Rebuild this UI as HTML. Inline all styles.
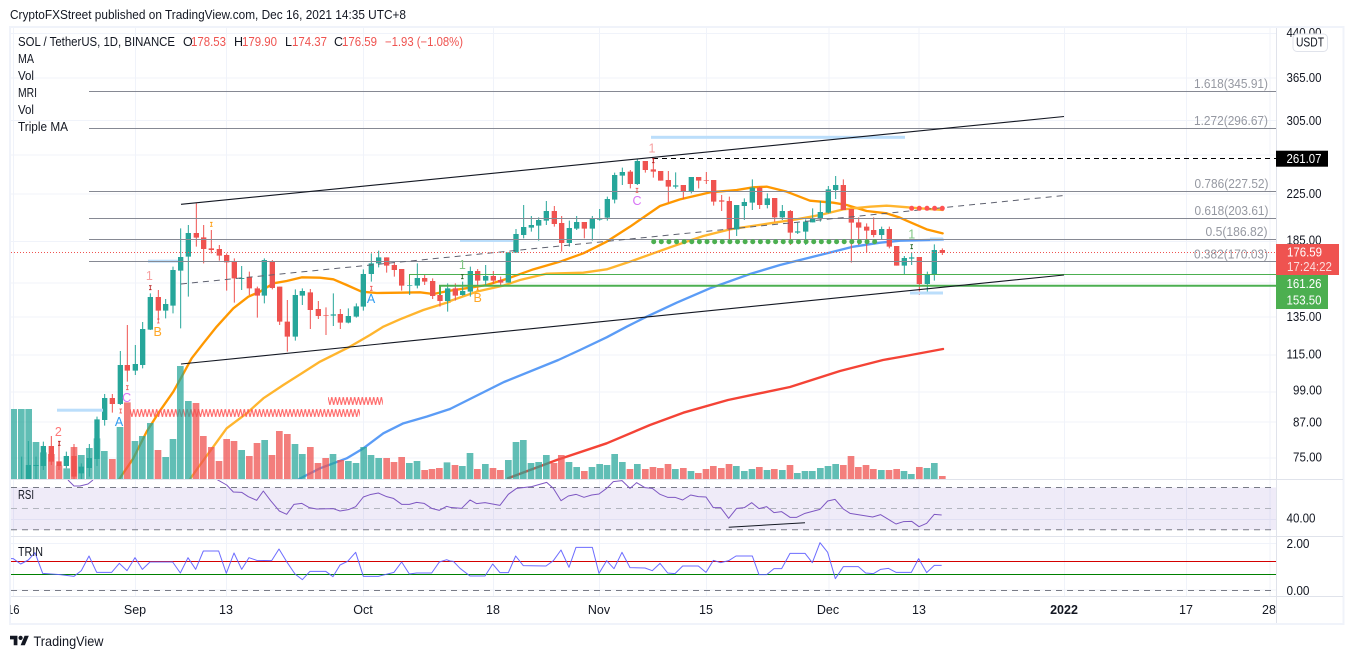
<!DOCTYPE html>
<html><head><meta charset="utf-8"><title>SOL / TetherUS</title>
<style>
html,body{margin:0;padding:0;background:#fff;width:1354px;height:659px;overflow:hidden}
svg{display:block}
text{font-family:"Liberation Sans",sans-serif;font-size:12.5px;fill:#131722}
.p{text-anchor:start}
.m{text-anchor:middle}
.f{fill:#9598a1;text-anchor:end}
.w{fill:#fff}
</style></head><body>
<svg width="1354" height="659" viewBox="0 0 1354 659" xmlns="http://www.w3.org/2000/svg">
<defs>
<pattern id="zz" patternUnits="userSpaceOnUse" width="3.81" height="8"><path d="M-1.9 8L0 0L1.9 8L3.81 0L5.7 8" fill="none" stroke="#f55" stroke-width="1.1" opacity=".9"/></pattern>
<clipPath id="c1"><rect x="11" y="28" width="1265.5" height="451"/></clipPath>
<clipPath id="c2"><rect x="11" y="480" width="1265.5" height="56"/></clipPath>
<clipPath id="c3"><rect x="10.5" y="597" width="30" height="26"/></clipPath>
</defs>

<text x="10" y="19" textLength="396" lengthAdjust="spacingAndGlyphs">CryptoFXStreet published on TradingView.com, Dec 16, 2021 14:35 UTC+8</text>
<rect x="10" y="27" width="1333.5" height="597" fill="#fff" stroke="#f0f3fa" stroke-width="2"/>

<!-- grid -->
<path d="M13.5 28V596M135.5 28V596M226.5 28V596M363.5 28V596M493.5 28V596M599.5 28V596M706.5 28V596M829 28V596M919 28V596M1064.5 28V596M1186.5 28V596M1270 28V596" stroke="#f0f3fa" fill="none"/>
<path d="M11 33.5H1276M11 78H1276M11 120.5H1276M11 155H1276M11 194H1276M11 241.5H1276M11 283H1276M11 317H1276M11 355H1276M11 392H1276M11 422H1276M11 458H1276M11 519.5H1276M11 543.5H1276M11 590H1276" stroke="#f0f3fa" fill="none"/>

<g clip-path="url(#c1)">
<!-- moving averages -->
<g fill="none" stroke-linejoin="round" stroke-linecap="round">
<polyline transform="translate(0,220) scale(.33333)" stroke="#ff9800" stroke-width="7" points="358,777 400,715 440,635 478,575 520,515 545,470 575,415 610,370 650,320 700,265 745,230 780,215 820,190 860,183 905,172 960,173 1000,178 1040,195 1085,215 1130,219 1200,218 1260,217 1300,222 1350,212"/>
<polyline transform="translate(450,130) scale(.33333)" stroke="#ff9800" stroke-width="7" points="0,482 60,473 110,465 175,445 250,418 330,395 400,370 470,335 540,290 630,228 690,208 780,187 860,180 910,172 950,170 1010,185 1080,212 1150,218 1190,225 1250,243 1310,250 1350,263 1370,272 1430,298 1478,310"/>
<polyline transform="translate(0,220) scale(.33333)" stroke="#ffb52e" stroke-width="7" points="570,777 600,735 640,680 680,625 740,580 790,535 850,495 905,460 960,425 1050,380 1110,345 1150,320 1200,298 1270,270 1350,245"/>
<polyline transform="translate(450,130) scale(.33333)" stroke="#ffb52e" stroke-width="7" points="0,513 80,485 160,467 210,450 290,431 400,428 470,418 540,395 610,370 680,345 760,318 840,298 960,280 1040,268 1110,255 1180,238 1260,230 1310,227 1350,230 1410,235 1478,240"/>
<polyline transform="translate(0,220) scale(.33333)" stroke="#5b9cf6" stroke-width="7" points="897,777 960,745 1040,715 1090,685 1150,640 1210,610 1280,590 1350,567"/>
<polyline transform="translate(450,130) scale(.33333)" stroke="#5b9cf6" stroke-width="7" points="0,837 162,756 325,690 390,660 470,622 530,590 590,560 680,518 780,475 900,432 990,405 1130,370 1210,350 1290,338 1350,332 1478,329"/>
<polyline stroke="#f44336" stroke-width="2.4" points="508,478.3 556.7,460 606.7,443.3 650,425 683.3,412.7 728,400 790,387 840,371 883,360 900,357 943,349"/>
</g>

<!-- zigzags -->
<g transform="translate(130,409)"><rect width="230" height="8" fill="url(#zz)"/></g>
<g transform="translate(328,397)"><rect width="55" height="8" fill="url(#zz)"/></g>

<!-- volume -->
<g transform="translate(0,220) scale(.33333)" fill="none" stroke-width="20">
<path stroke="#26a69a" stroke-opacity=".73" d="M41 567V777M64 567V777M86 567V777M108 666V777M130 697V777M200 745V777M244 705V777M268 684V777M291 655V777M313 693V777M360 621V777M405 663V777M427 648V777M451 609V777M497 711V777M519 657V777M541 438V777M565 543V777M725 690V777M794 660V777M885 672V777M907 702V777M999 702V777M1045 723V777M1068 729V777M1091 681V777M1113 705V777M1136 714V777M1228 729V777M1251 723V777M1341 727V777"/>
<path stroke="#ef5350" stroke-opacity=".75" d="M154 702V777M177 737V777M222 681V777M337 717V777M382 547V777M474 690V777M588 549V777M610 648V777M634 681V777M657 723V777M680 657V777M702 663V777M748 708V777M771 669V777M816 705V777M838 633V777M862 642V777M931 681V777M954 729V777M977 714V777M1022 720V777M1160 714V777M1182 726V777M1205 711V777M1274 750V777M1296 747V777M1318 744V777"/>
</g>
<g transform="translate(450,400) scale(.33333)" fill="none" stroke-width="20">
<path stroke="#26a69a" stroke-opacity=".73" d="M37 198V237M60 159V237M106 192V237M175 180V237M198 126V237M220 120V237M243 189V237M266 186V237M289 165V237M357 186V237M380 201V237M426 201V237M449 192V237M471 195V237M494 162V237M517 186V237M562 192V237M676 207V237M723 213V237M859 198V237M883 213V237M906 207V237M951 210V237M997 210V237M1042 219V237M1065 213V237M1087 213V237M1111 204V237M1134 198V237M1157 192V237M1294 210V237M1362 213V237M1384 222V237M1431 204V237M1453 189V237"/>
<path stroke="#ef5350" stroke-opacity=".75" d="M15 195V237M82 207V237M129 204V237M151 210V237M312 189V237M334 165V237M403 213V237M540 207V237M586 207V237M609 201V237M631 204V237M654 192V237M700 204V237M745 219V237M768 207V237M790 198V237M814 204V237M837 192V237M928 201V237M973 207V237M1020 195V237M1180 195V237M1203 168V237M1225 201V237M1248 195V237M1270 207V237M1317 210V237M1340 207V237M1408 201V237M1477 228V237"/>
</g>

<!-- candles -->
<g transform="translate(0,220) scale(.33333)" fill="none">
<path stroke="#26a69a" stroke-width="3" d="M65 710V777M85 663V777M108 710V777M130 665V750M199 695V745M244 730V777M268 672V770M291 590V738M314 522V617M361 393V555M406 375V465M428 306V445M451 220V330M497 237V295M519 140V280M542 25V325M565 15V230M725 138V210M793 115V250M886 208V362M907 205V255M1000 220V318M1045 265V310M1069 250V293M1090 148V272M1114 100V185M1136 92V142M1229 195V225M1252 130V205M1343 190V275"/>
<path stroke="#26a69a" stroke-width="16" d="M85 735V777M108 735V738M130 678V738M199 708V738M244 740V760M268 714V744M291 598V717M314 534V600M361 435V552M406 432V452M428 327V435M451 231V329M497 252V272M519 150V257M542 111V152M565 39V110M725 174V177M793 120V227M886 225V350M907 213V227M1000 283V287M1045 288V308M1069 259V290M1090 162V260M1114 130V162M1136 112V130M1229 195V197M1252 174V197M1343 205V243"/>
<path stroke="#ef5350" stroke-width="3" d="M154 648V735M177 665V750M222 672V777M337 522V578M382 315V485M475 210V300M589 -50V80M611 15V130M634 30V100M658 75V122M680 100V212M703 115V248M748 155V225M772 200V293M817 120V208M839 200V315M862 240V395M931 207V327M955 243V297M978 262V345M1021 267V327M1160 112V158M1183 127V170M1205 147V212M1274 165V195M1298 175V237M1320 195V260"/>
<path stroke="#ef5350" stroke-width="16" d="M154 678V725M177 724V738M222 708V770M337 534V552M382 435V452M475 231V272M589 39V53M611 52V87M634 85V90M658 87V107M680 105V127M703 125V175M748 172V205M772 205V227M817 123V204M839 200V305M862 305V350M931 217V270M955 267V288M978 286V288M1021 282V308M1160 112V137M1183 135V150M1205 147V197M1274 174V185M1298 183V228M1320 225V243"/>
</g>
<g transform="translate(450,130) scale(.33333)" fill="none">
<path stroke="#26a69a" stroke-width="3" d="M38 455V497M61 410V500M107 405V465M175 367V458M198 297V368M221 225V325M244 258V305M266 262V332M289 213V285M358 272V350M380 258V300M427 258V332M449 237V272M472 200V272M494 128V220M517 113V165M562 88V165M677 127V176M724 141V190M860 225V318M883 205V270M907 148V240M952 190V235M997 225V270M1043 278V312M1067 268V345M1088 235V277M1111 213V275M1135 168V250M1157 138V207M1295 290V330"/>
<path stroke="#26a69a" stroke-width="16" d="M38 483V495M61 423V485M107 438V452M175 367V458M198 312V368M221 291V315M244 285V293M266 270V287M289 243V272M358 294V339M380 276V296M427 265V296M449 267V269M472 207V263M494 135V209M517 126V137M562 93V162M677 166V170M724 141V183M860 225V298M883 216V228M907 173V218M952 205V225M997 243V262M1043 304V308M1067 275V305M1088 266V277M1111 246V264M1135 178V248M1157 165V180M1295 297V315"/>
<path stroke="#ef5350" stroke-width="3" d="M16 460V512M83 417V480M130 423V462M152 440V465M313 228V290M335 258V365M403 276V325M541 120V175M586 93V128M610 85V143M632 123V152M655 123V217M700 165V207M746 141V175M769 126V162M791 150V227M815 195V243M838 200V328M929 170V237M974 204V275M1021 240V345M1180 148V240M1204 237V398M1226 262V345M1250 280V367M1271 262V322M1318 290V355M1340 348V407"/>
<path stroke="#ef5350" stroke-width="16" d="M16 475V497M83 423V452M130 438V452M152 450V458M313 243V282M335 279V339M403 276V296M541 125V162M586 93V120M610 118V125M632 123V152M655 150V170M700 165V183M746 141V152M769 151V153M791 150V215M815 211V215M838 213V298M929 173V225M974 204V262M1021 243V308M1180 165V240M1204 237V278M1226 277V293M1250 290V302M1271 300V315M1318 297V350M1340 348V407"/>
</g>
<g transform="translate(760,150) scale(.33333)" fill="none">
<path stroke="#26a69a" stroke-width="3" d="M433 318V372M455 307V345M502 365V425M523 283V392"/>
<path stroke="#26a69a" stroke-width="16" d="M433 324V347M455 322V326M502 373V402M523 300V373"/>
<path stroke="#ef5350" stroke-width="3" d="M478 321V435M547 295V315"/>
<path stroke="#ef5350" stroke-width="16" d="M478 321V402M547 300V309"/>
</g>

<!-- highlights -->
<g fill="#bbdefb">
<rect x="57" y="408.7" width="46" height="3"/>
<rect x="148" y="259.7" width="30" height="3"/>
<rect x="460" y="239" width="53" height="3"/>
<rect x="651" y="135.8" width="254" height="3"/>
<rect x="910" y="291.5" width="33" height="3"/>
<rect x="930" y="237.5" width="13" height="3"/>
</g>

<!-- fib lines -->
<path d="M89 91.5H1276M89 128.5H1276M89 191.5H1276M89 218.5H1276M89 239.5H1276M89 261.5H1276" stroke="#868993" fill="none"/>
<!-- green zones -->
<path d="M409.5 285V274.5H1276" stroke="#4caf50" fill="none"/>
<path d="M440 295V285.7H1276" stroke="#4caf50" stroke-width="2" fill="none"/>
<!-- trend lines -->
<path d="M181 204.3L1064 116.5M181 364L1064 275" stroke="#131722" stroke-width="1.1" fill="none"/>
<path d="M181 284L1064 195.5" stroke="#5f6270" stroke-dasharray="6 5" fill="none"/>
<path d="M653 158.5H1276" stroke="#000" stroke-dasharray="5 4" fill="none"/>
<!-- dots -->
<path d="M653.7 241.7H882" stroke="#4caf50" stroke-width="5" stroke-linecap="round" stroke-dasharray="0 7.62" fill="none"/>
<g fill="#ff5252"><circle cx="911.7" cy="208.3" r="2.5"/><circle cx="919.3" cy="208.3" r="2.5"/><circle cx="927" cy="208.3" r="2.5"/><circle cx="934.6" cy="208.3" r="2.5"/><circle cx="942.3" cy="208.3" r="2.5"/></g>
<!-- last price -->
<path d="M11 252.5H1276" stroke="#ef5350" stroke-dasharray="1 2" fill="none"/>

<!-- tiny markers -->
<g fill="none" stroke-width=".8">
<path stroke="#b71c1c" d="M149 285.7h2.6m-1.3 0v4m-1.3 0h2.6M58 441.3h2.6m-1.3 0v4m-1.3 0h2.6M652 158.7h2.6m-1.3 0v4m-1.3 0h2.6"/>
<path stroke="#ef5350" d="M157 319h2.6m-1.3 0v4m-1.3 0h2.6M126 385.7h2.6m-1.3 0v4m-1.3 0h2.6M119.4 409h2.6m-1.3 0v4m-1.3 0h2.6M370 286.3h2.6m-1.3 0v4m-1.3 0h2.6M635.7 188.3h2.6m-1.3 0v4m-1.3 0h2.6"/>
<path stroke="#ff9800" d="M210 222.3h2.6m-1.3 0v4m-1.3 0h2.6M476.4 287h2.6m-1.3 0v3m-1.3 0h2.6"/>
<path stroke="#1b5e20" d="M461 274.7h2.6m-1.3 0v4m-1.3 0h2.6M910.4 244.7h2.6m-1.3 0v4m-1.3 0h2.6"/>
</g>
<!-- pattern letters -->
<g>
<text class="m" x="149.3" y="280" style="font-size:12.5px;fill:#f7a0a0">1</text>
<text class="m" x="58.3" y="436" style="font-size:12.5px;fill:#f77">2</text>
<text class="m" x="157.7" y="336" style="font-size:12.5px;fill:#ffa726">B</text>
<text class="m" x="126.7" y="402" style="font-size:12.5px;fill:#d873f5">C</text>
<text class="m" x="119" y="426" style="font-size:12.5px;fill:#2f9bf0">A</text>
<text class="m" x="371" y="303" style="font-size:12.5px;fill:#2f9bf0">A</text>
<text class="m" x="462.3" y="269" style="font-size:12.5px;fill:#81c784">1</text>
<text class="m" x="477.7" y="302" style="font-size:12.5px;fill:#ffa726">B</text>
<text class="m" x="637" y="205" style="font-size:12.5px;fill:#d873f5">C</text>
<text class="m" x="652" y="152.5" style="font-size:12.5px;fill:#f7a0a0">1</text>
<text class="m" x="911.7" y="238.5" style="font-size:12.5px;fill:#81c784">1</text>
</g>
</g>

<!-- fib labels -->
<text class="f" x="1268" y="88" textLength="74" lengthAdjust="spacingAndGlyphs">1.618(345.91)</text>
<text class="f" x="1268" y="125" textLength="74" lengthAdjust="spacingAndGlyphs">1.272(296.67)</text>
<text class="f" x="1268.5" y="188" textLength="74" lengthAdjust="spacingAndGlyphs">0.786(227.52)</text>
<text class="f" x="1268.5" y="215" textLength="74" lengthAdjust="spacingAndGlyphs">0.618(203.61)</text>
<text class="f" x="1267.5" y="236" textLength="62" lengthAdjust="spacingAndGlyphs">0.5(186.82)</text>
<text class="f" x="1268" y="258.5" textLength="74" lengthAdjust="spacingAndGlyphs">0.382(170.03)</text>

<!-- legend -->
<text x="18" y="46" textLength="157" lengthAdjust="spacingAndGlyphs">SOL / TetherUS, 1D, BINANCE</text>
<text x="183" y="46">O</text><text x="191" y="46" textLength="35" lengthAdjust="spacingAndGlyphs" style="fill:#ef5350">178.53</text>
<text x="234" y="46">H</text><text x="242" y="46" textLength="35" lengthAdjust="spacingAndGlyphs" style="fill:#ef5350">179.90</text>
<text x="285" y="46">L</text><text x="292" y="46" textLength="35" lengthAdjust="spacingAndGlyphs" style="fill:#ef5350">174.37</text>
<text x="334" y="46">C</text><text x="342" y="46" textLength="35" lengthAdjust="spacingAndGlyphs" style="fill:#ef5350">176.59</text>
<text x="385" y="46" textLength="78" lengthAdjust="spacingAndGlyphs" style="fill:#ef5350">−1.93 (−1.08%)</text>
<text x="18" y="63" textLength="16" lengthAdjust="spacingAndGlyphs">MA</text>
<text x="18" y="80" textLength="16" lengthAdjust="spacingAndGlyphs">Vol</text>
<text x="18" y="97" textLength="19" lengthAdjust="spacingAndGlyphs">MRI</text>
<text x="18" y="114" textLength="16" lengthAdjust="spacingAndGlyphs">Vol</text>
<text x="18" y="131" textLength="50" lengthAdjust="spacingAndGlyphs">Triple MA</text>

<!-- RSI pane -->
<rect x="11" y="487.5" width="1265.5" height="42.5" fill="#7e57c2" fill-opacity=".12"/>
<path d="M11 487.5H1276M11 529.7H1276" stroke="#787b86" stroke-dasharray="6 5" fill="none"/>
<path d="M11 508.5H1276" stroke="#b2b5be" stroke-dasharray="6 5" fill="none"/>
<g clip-path="url(#c2)" fill="none" stroke="#7e57c2" stroke-width="3" stroke-linejoin="round">
<polyline stroke-width="1" points="68,480 74,486 80,486 88,484 93,480"/>
<polyline transform="translate(0,400) scale(.33333)" points="650,238 680,255 700,276 725,277 745,290 770,301 790,273 812,302 838,333 860,343 882,313 905,310 928,323 950,327 1000,326 1020,333 1045,329 1067,320 1090,291 1110,284 1135,279 1160,290 1180,295 1205,313 1228,313 1250,307 1272,310 1295,325 1318,331 1340,319 1350,322"/>
<polyline transform="translate(450,400) scale(.33333)" points="0,322 35,325 60,300 80,311 105,308 150,316 175,283 200,265 245,260 290,247 310,265 333,302 355,288 378,283 402,292 425,285 447,282 470,265 490,245 516,242 540,265 560,248 585,263 607,265 630,283 653,292 675,292 698,300 722,285 745,290 768,291 790,323 812,323 836,355 860,325 883,323 905,308 927,326 950,320 972,338 995,335 1020,352 1040,352 1065,340 1110,328 1133,303 1155,298 1180,327 1200,340 1268,351 1292,344 1338,372 1360,365 1385,364 1407,380 1430,370 1453,343 1475,345"/>
</g>
<path d="M728.7 527.3L805 522.7" stroke="#131722" stroke-width="1" fill="none"/>
<text x="18" y="499" textLength="16" lengthAdjust="spacingAndGlyphs">RSI</text>

<!-- TRIN pane -->
<path d="M11 561.5H1276" stroke="#d40000" fill="none"/>
<path d="M11 574.5H1276" stroke="#008000" fill="none"/>
<path d="M11 590.5H1276" stroke="#787b86" stroke-dasharray="6 5" fill="none"/>
<g fill="none" stroke="#5c5cff" stroke-width="3" stroke-linejoin="round" stroke-opacity=".9">
<polyline transform="translate(0,400) scale(.33333)" points="33,476 40,476 62,492 85,480 105,458 128,520 180,524 222,529 244,512 267,468 290,517 335,517 358,490 381,512 405,473 427,508 450,486 518,486 541,519 564,473 587,508 610,453 656,453 679,520 702,459 725,508 747,473 770,481 815,482 837,447 860,485 885,522 907,539 930,514 977,514 999,530 1020,495 1043,484 1067,457 1090,529 1135,529 1182,517 1205,486 1228,522 1250,519 1295,519 1318,486 1340,479 1350,483"/>
<polyline transform="translate(450,400) scale(.33333)" points="0,483 10,484 30,505 60,528 105,528 128,492 150,518 175,518 197,468 220,497 288,498 310,482 333,450 357,502 378,442 427,442 447,520 470,482 492,506 516,457 540,503 585,504 607,512 630,490 653,519 675,521 698,498 745,498 768,517 790,481 812,488 836,482 858,468 907,468 927,524 950,524 972,506 995,506 1020,460 1065,460 1087,488 1110,428 1133,457 1156,536 1180,500 1225,500 1247,519 1270,521 1292,508 1315,505 1338,517 1384,517 1406,476 1430,518 1453,496 1475,496"/>
</g>
<text x="18" y="556" textLength="25" lengthAdjust="spacingAndGlyphs">TRIN</text>

<!-- separators -->
<path d="M11 479.5H1343M11 536.5H1343M11 596.5H1343M1276.5 28V623" stroke="#e0e3eb" fill="none"/>

<!-- time axis -->
<g clip-path="url(#c3)"><text x="7" y="614" textLength="12.5" lengthAdjust="spacingAndGlyphs">16</text></g>
<g>
<text class="m" x="135" y="614">Sep</text>
<text class="m" x="226" y="614">13</text>
<text class="m" x="363" y="614">Oct</text>
<text class="m" x="493" y="614">18</text>
<text class="m" x="599" y="614">Nov</text>
<text class="m" x="706" y="614">15</text>
<text class="m" x="828" y="614">Dec</text>
<text class="m" x="919" y="614">13</text>
<text class="m" x="1064" y="614" style="font-weight:bold">2022</text>
<text class="m" x="1186" y="614">17</text>
<text class="m" x="1269" y="614">28</text>
</g>

<!-- price axis -->
<g>
<text x="1286.5" y="37" textLength="35" lengthAdjust="spacingAndGlyphs">440.00</text>
<text x="1286.5" y="82" textLength="35" lengthAdjust="spacingAndGlyphs">365.00</text>
<text x="1286.5" y="125" textLength="35" lengthAdjust="spacingAndGlyphs">305.00</text>
<text x="1286.5" y="198" textLength="35" lengthAdjust="spacingAndGlyphs">225.00</text>
<text x="1286.5" y="244.5" textLength="35" lengthAdjust="spacingAndGlyphs">185.00</text>
<text x="1286.5" y="321" textLength="35" lengthAdjust="spacingAndGlyphs">135.00</text>
<text x="1286.5" y="358.5" textLength="35" lengthAdjust="spacingAndGlyphs">115.00</text>
<text x="1293" y="394.5" textLength="29" lengthAdjust="spacingAndGlyphs">99.00</text>
<text x="1293" y="426.5" textLength="29" lengthAdjust="spacingAndGlyphs">87.00</text>
<text x="1293" y="461.5" textLength="29" lengthAdjust="spacingAndGlyphs">75.00</text>
<text x="1286.5" y="522.5" textLength="29" lengthAdjust="spacingAndGlyphs">40.00</text>
<text x="1286.5" y="548" textLength="23" lengthAdjust="spacingAndGlyphs">2.00</text>
<text x="1286.5" y="595" textLength="23" lengthAdjust="spacingAndGlyphs">0.00</text>
</g>
<rect x="1293" y="34" width="34.5" height="17.5" rx="4" fill="#fff" stroke="#e0e3eb"/>
<text class="m" x="1310" y="46.5" textLength="28" lengthAdjust="spacingAndGlyphs">USDT</text>

<rect x="1276" y="150.7" width="52" height="16" fill="#000"/>
<text class="w" x="1286.5" y="163" textLength="35" lengthAdjust="spacingAndGlyphs" style="fill:#fff">261.07</text>
<rect x="1276" y="244" width="63" height="31" fill="#ef5350"/>
<text x="1287" y="256.5" textLength="35" lengthAdjust="spacingAndGlyphs" style="fill:#fff">176.59</text>
<text x="1287" y="271" textLength="45" lengthAdjust="spacingAndGlyphs" style="fill:#fff;opacity:.8">17:24:22</text>
<rect x="1276" y="275" width="52" height="34" fill="#4caf50"/>
<text x="1286.5" y="288" textLength="35" lengthAdjust="spacingAndGlyphs" style="fill:#fff">161.26</text>
<text x="1286.5" y="304.5" textLength="35" lengthAdjust="spacingAndGlyphs" style="fill:#fff">153.50</text>

<!-- logo -->
<g transform="translate(10,633.6) scale(.53)" fill="#131722"><path d="M14 22H7V11H0V4h14v18zM28 22h-8l7.5-18h8L28 22z"/><circle cx="20" cy="8" r="4"/></g>
<text x="33.5" y="646" textLength="70" lengthAdjust="spacingAndGlyphs" style="font-size:14px">TradingView</text>
</svg>
</body></html>
